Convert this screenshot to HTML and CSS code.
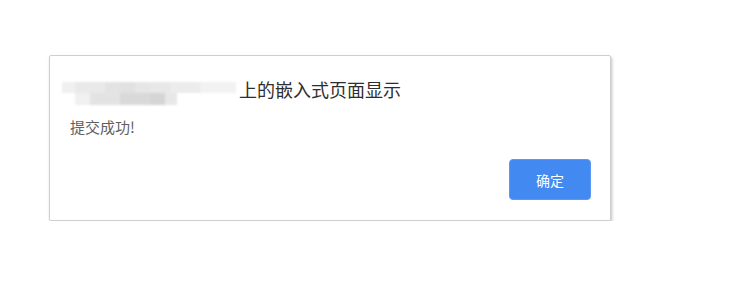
FILE: index.html
```html
<!DOCTYPE html>
<html lang="zh-CN">
<head>
<meta charset="utf-8">
<title>提交成功</title>
<link rel="stylesheet" href="styles.css">
</head>
<body>
<div class="dialog">
  <div class="title">
    <span class="smudge" aria-hidden="true">
      <span class="row r1"><i class="c1"></i><i class="c2"></i><i class="c3"></i><i class="c4"></i><i class="c5"></i><i class="c6"></i><i class="c7"></i><i class="c8"></i></span>
      <span class="row r2"><i class="d1"></i><i class="d2"></i><i class="d3"></i><i class="d4"></i><i class="d5"></i><i class="d6"></i></span>
    </span>
    <span class="title-text">上的嵌入式页面显示</span>
  </div>
  <div class="message">提交成功!</div>
  <div class="actions">
    <button class="ok">确定</button>
  </div>
</div>
</body>
</html>
```

FILE: styles.css
```css
html, body {
  margin: 0;
  padding: 0;
  background: #ffffff;
}
body {
  padding: 55px 0 0 49px;
  font-family: "Noto Sans CJK SC", "Noto Sans", sans-serif;
}
.dialog {
  border: 1px solid #cfcfcf;
  border-radius: 2px;
  box-shadow: 1px 2px 3px rgba(0, 0, 0, 0.25);
  padding: 21px 19px 20px 20px;
  box-sizing: content-box;
  width: 521px;
}
.title {
  display: flex;
  align-items: flex-start;
  height: 24px;
  font-size: 18px;
  line-height: 24px;
  color: #2e2e2e;
}
.smudge {
  display: flex;
  flex-direction: column;
  width: 176px;
  height: 23px;
  margin-left: -8px;
  margin-top: 5px;
  filter: blur(1.2px);
}
.row {
  display: flex;
  height: 11px;
}
.row i {
  display: block;
  height: 100%;
}
.c1 { width: 13px; background: #f0f0f0; }
.c2 { width: 30px; background: #e9e9e9; }
.c3 { width: 15px; background: #e3e3e3; }
.c4 { width: 15px; background: #e1e1e1; }
.c5 { width: 15px; background: #e6e6e6; }
.c6 { width: 20px; background: #e8e8e8; }
.c7 { width: 30px; background: #ececec; }
.c8 { width: 36px; background: #f2f2f2; }
.r2 { height: 12px; }
.d1 { width: 13px; background: #ffffff; }
.d2 { width: 15px; background: #f0f0f0; }
.d3 { width: 30px; background: #e3e3e3; }
.d4 { width: 30px; background: #d9d9d9; }
.d5 { width: 15px; background: #d5d5d5; }
.d6 { width: 12px; background: #e8e8e8; }
.title-text {
  margin-left: 1px;
  white-space: nowrap;
}
.message {
  margin-top: 16px;
  font-size: 15px;
  line-height: 20px;
  color: #606060;
}
.actions {
  display: flex;
  justify-content: flex-end;
  margin-top: 22px;
}
.ok {
  width: 82px;
  height: 41px;
  border: 1px solid #5c97f5;
  border-radius: 4px;
  background: #4289f2;
  color: #ffffff;
  font-family: "Noto Sans CJK SC", "Noto Sans", sans-serif;
  font-size: 14px;
  padding: 0;
  cursor: pointer;
}
```
